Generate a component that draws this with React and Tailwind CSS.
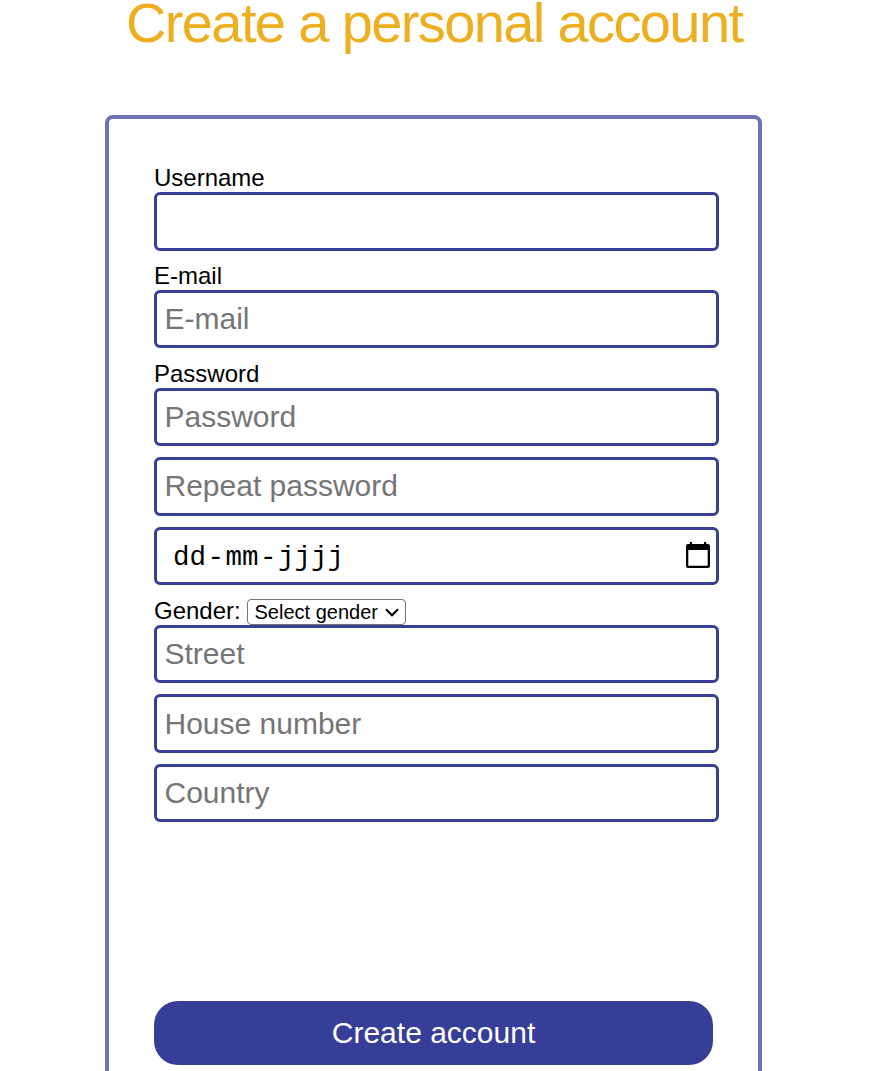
function Label({ className = "", children }) {
  return (
    <label className={`block text-[24px] leading-[28px] whitespace-nowrap ${className}`}>
      {children}
    </label>
  );
}

function Field({ className = "pb-[1px]", tall = false, ...props }) {
  return (
    <input
      className={`block w-[565px] shrink-0 rounded-[6px] border-[3px] border-[#373e98] bg-white px-[7.5px] text-[30px] text-black placeholder:text-[#757575] placeholder:opacity-100 outline-none ${
        tall ? "h-[59px]" : "h-[58px]"
      } ${className}`}
      {...props}
    />
  );
}

function CalendarIcon() {
  return (
    <svg width="24" height="26" viewBox="0 0 24 26" className="mb-[2px] block">
      <path
        fillRule="evenodd"
        d="M3.8 0h2.2v2h12V0h2.2v2H22a2 2 0 0 1 2 2v20a2 2 0 0 1-2 2H2a2 2 0 0 1-2-2V4a2 2 0 0 1 2-2h1.8zM2.3 8v15.7h19.4V8z"
      />
    </svg>
  );
}

function DateField() {
  return (
    <div className="mt-[11px] flex h-[58px] w-[565px] shrink-0 items-center justify-between rounded-[6px] border-[3px] border-[#373e98] pr-[6px] pl-[16px]">
      <div className="flex pt-[3px] font-['Liberation_Mono',monospace] text-[27.5px] leading-[34px]">
        <span className="pr-[1.5px]">dd</span>
        <span>-</span>
        <span className="px-[1.5px]">mm</span>
        <span>-</span>
        <span className="pl-[1.5px]">jjjj</span>
      </div>
      <CalendarIcon />
    </div>
  );
}

function GenderSelect() {
  return (
    <button
      type="button"
      className="flex h-[26px] w-[159px] items-center justify-between rounded-[4px] border border-[#767676] bg-white pr-[6px] pl-[6.5px] text-[20px] leading-[24px]"
    >
      <span className="whitespace-nowrap">Select gender</span>
      <svg width="14" height="9" viewBox="0 0 14 9" fill="none" stroke="black" strokeWidth="2.2">
        <path d="M1 1.2 7 7.2 13 1.2" />
      </svg>
    </button>
  );
}

export default function App() {
  return (
    <main className="h-[1071px] w-[886px] overflow-hidden bg-white font-['Liberation_Sans',Arial,sans-serif] text-black">
      <h1 className="h-[115px] pl-[126px] text-[56px] leading-[45px] tracking-[-1.62px] whitespace-nowrap text-[#edae20]">
        Create a personal account
      </h1>
      <form className="ml-[105px] flex h-[1000px] w-[657px] flex-col rounded-[8px] border-4 border-[#6f72b5] pt-[45px] pl-[45px]">
        <Label>Username</Label>
        <Field tall aria-label="Username" />
        <Label className="mt-[11px]">E-mail</Label>
        <Field placeholder="E-mail" />
        <Label className="mt-[12px]">Password</Label>
        <Field placeholder="Password" />
        <Field tall placeholder="Repeat password" className="mt-[11px] pb-[1px]" />
        <DateField />
        <div className="mt-[12px] flex h-[28px] items-end">
          <Label className="w-[93px]">Gender:</Label>
          <GenderSelect />
        </div>
        <Field placeholder="Street" />
        <Field tall placeholder="House number" className="mt-[11px] pt-[1px]" />
        <Field placeholder="Country" className="mt-[11px] pb-[1px]" />
        <button
          type="button"
          className="mt-[179px] h-[64px] w-[559px] shrink-0 rounded-[24px] bg-[#373e98] pb-[2px] text-[30px] text-white"
        >
          Create account
        </button>
      </form>
    </main>
  );
}
